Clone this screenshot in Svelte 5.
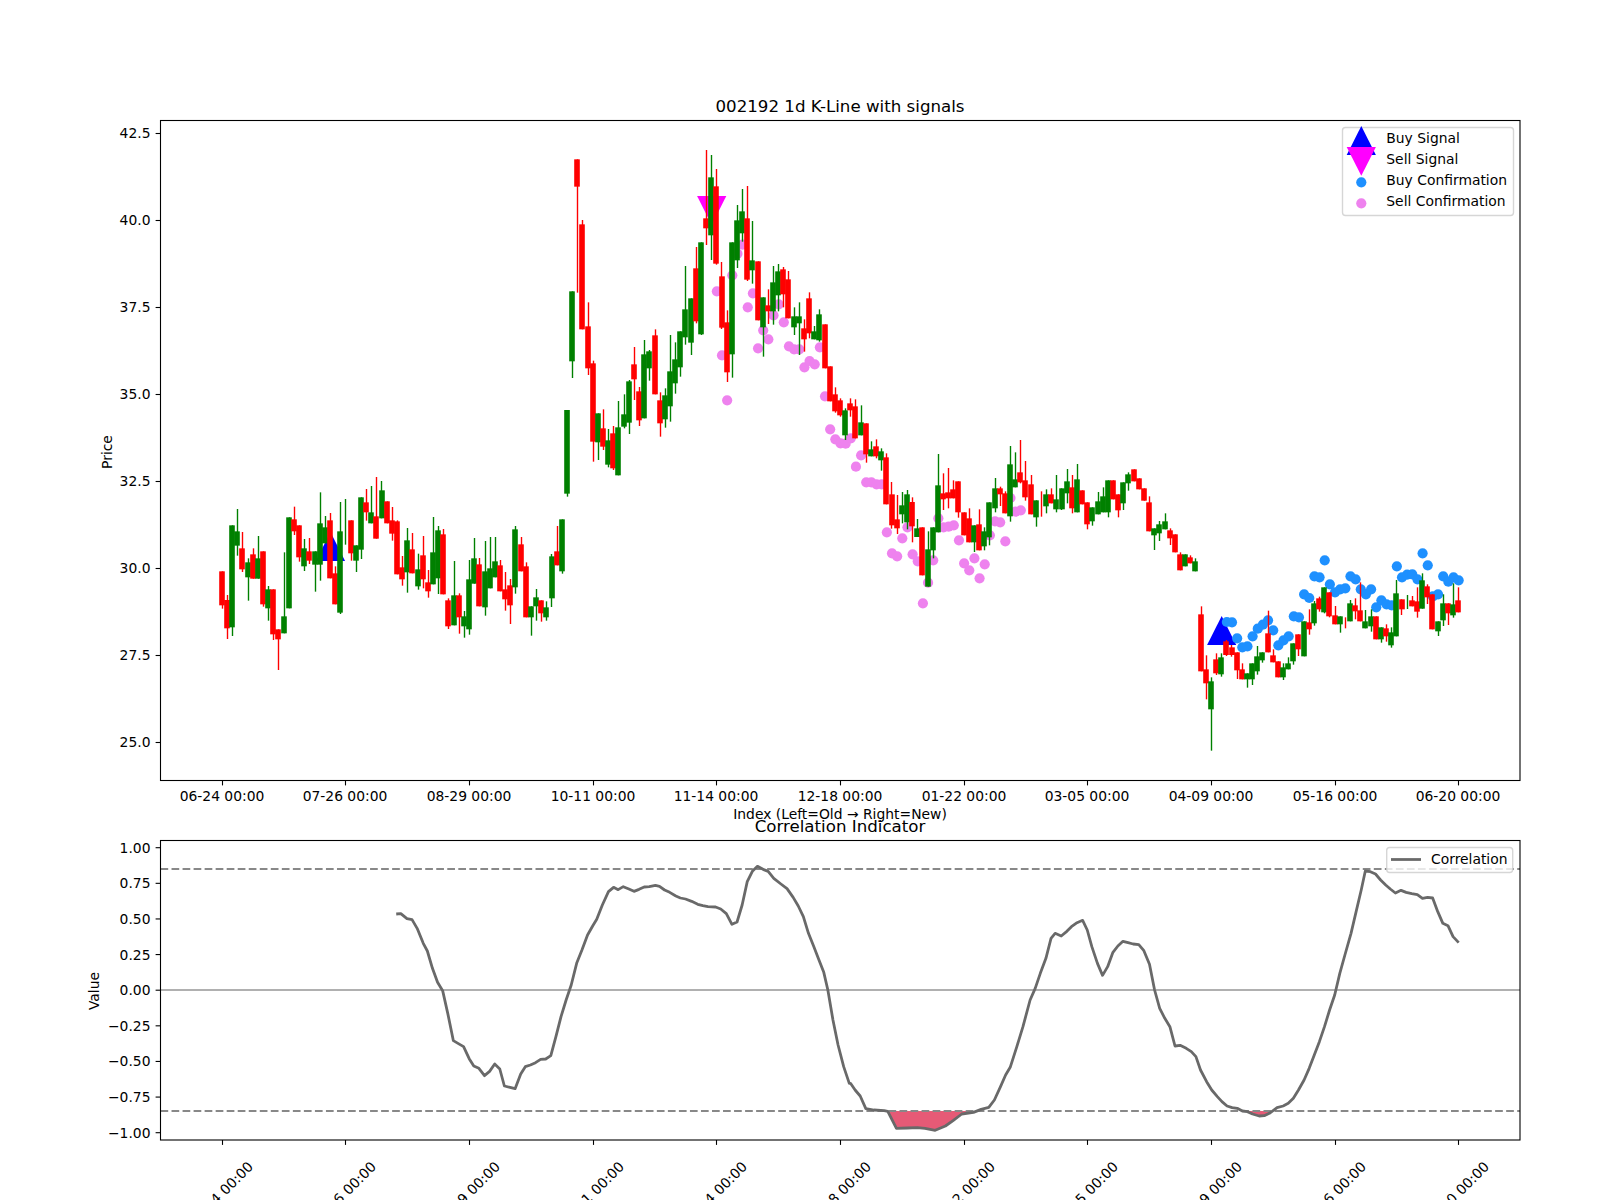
<script>
  const X0 = 222.3, STEP = 5.1515;
  const px = (i) => X0 + STEP * i;
  const seg = (y0, rows) =>
    rows.map(([c, bt, bb, wt, wb]) => ({
      c,
      hasBody: bb > bt,
      bt: y0 + bt / 3,
      bb: y0 + bb / 3,
      wt: y0 + wt / 3,
      wb: y0 + wb / 3
    }));

  // [isRed, bodyTop, bodyBottom, wickTop, wickBottom]
  const candles = [
    ...seg(470, [
      [1,304,406,304,416],[1,390,475,375,507],[0,166,472,166,498],[0,184,227,117,257],[1,235,298,186,306],
      [0,277,322,265,392],[1,253,326,235,326],[0,265,326,198,326],[1,244,403,244,410],[0,358,415,348,452],
      [1,358,493,358,510],[1,478,508,478,600],[0,439,490,247,490],[0,142,415,142,415],[1,148,184,110,195],
      [1,166,262,166,275],[0,235,289,207,303],[1,244,272,204,282],[0,244,284,244,365],[0,160,284,67,332],
      [0,172,220,138,220],[1,151,325,129,325],[1,310,403,289,403],[0,184,428,96,432],[0,0,0,87,224],
      [1,151,250,151,272],[0,226,272,226,306],[0,82,239,82,267],[1,97,127,57,152],[0,127,160,48,160],
      [1,139,206,21,206],[0,61,145,33,145],[1,94,160,94,160],[1,151,191,111,212],[1,154,313,151,313],
      [1,292,328,258,347],[0,211,307,174,368],[1,238,310,189,310],[0,298,349,251,359],[1,256,328,198,355],
      [1,337,364,300,383],[0,247,343,141,343],[0,181,325,168,372],[1,193,373,177,373],[1,391,469,385,477],
      [0,376,466,273,466],[1,376,442,370,491],[0,439,469,423,503],[0,328,478,270,494],[0,265,341,204,341],
      [1,283,409,264,409],[0,304,412,213,437],[0,295,355,201,355],[0,274,322,201,322],[1,286,364,270,364],
      [1,358,388,306,422],[1,346,406,327,462],[0,178,352,168,371],[1,223,304,201,304],[1,289,442,277,442],
      [0,409,442,409,497],[0,382,409,357,452],[1,391,430,391,455],[0,412,442,394,452],[0,259,385,252,411],
      [1,244,286,168,286],[0,148,304,148,311]
    ]),
    ...seg(130, [
      [0,840,1091,840,1100],[0,484,694,484,744],[1,88,170,88,488],[1,283,598,270,598],[1,589,715,517,735],
      [1,700,935,692,995],[0,850,937,850,990],[1,895,950,838,960],[0,931,1004,897,1012],[1,910,1015,888,1020],
      [0,892,1036,813,1036],[0,853,890,793,895],[0,754,878,750,912],[1,703,748,651,810],[1,784,871,771,888],
      [0,673,865,630,865],[0,664,715,660,752],[1,616,793,598,793],[1,811,880,787,920],[0,796,868,775,893],
      [0,724,829,615,875],[0,688,760,637,791],[0,604,712,604,740],[0,538,622,408,644],[0,505,638,505,675],
      [1,415,574,351,580],[0,337,613,337,615],[1,265,295,60,345],[0,142,316,75,390],[1,169,401,117,404],
      [1,439,593,396,597],[1,577,727,541,756],[0,337,673,337,743],[0,271,391,225,414],[0,244,310,177,335],
      [1,265,449,168,453],[0,391,421,273,461],[1,394,571,394,571],[0,502,592,502,680],[1,526,544,478,582],
      [0,457,544,408,584],[0,424,496,402,544],[1,418,493,411,532],[1,448,565,423,565],[0,559,592,532,615],
      [0,559,580,517,675],[1,595,628,568,665],[1,505,610,487,625],[0,604,628,588,628],[0,553,631,538,635],
      [1,583,715,583,715],[1,709,814,709,814],[1,793,844,772,848],[1,811,856,805,860],[0,841,916,835,930],
      [1,820,841,805,860],[1,829,925,808,925],[0,877,916,826,916],[1,880,973,880,998],[0,958,979,934,979],
      [1,949,979,928,985],[0,964,991,955,1022]
    ]),
    ...seg(430, [
      [1,82,223,70,223],[1,193,286,156,296],[1,268,295,195,312],[0,226,253,186,280],[0,193,277,180,298],
      [1,216,289,202,337],[0,295,321,267,321],[1,292,436,292,436],[0,358,470,304,470],[0,292,361,292,385],
      [0,166,307,72,307],[1,190,208,130,240],[1,187,205,114,235],[1,178,205,151,205],[1,154,247,154,263],
      [1,247,316,247,316],[1,265,337,235,337],[0,286,337,286,366],[1,283,361,238,361],[0,304,349,292,361],
      [0,217,322,217,346],[0,175,235,144,247],[1,175,193,170,228],[1,190,250,184,250],[0,103,259,48,275],
      [0,148,172,67,172],[1,127,157,30,160],[1,151,202,93,212],[1,163,253,135,253],[0,211,262,211,290],
      [1,0,0,184,260],[0,193,229,178,250],[1,193,220,175,220],[0,208,238,135,247],[0,175,238,175,240],
      [0,154,190,117,220],[1,172,235,135,250],[0,148,247,102,247],[1,181,223,181,223],[1,217,283,217,298],
      [0,232,274,232,287],[0,214,253,186,253],[0,199,247,172,247],[0,151,247,151,262],[1,151,208,151,208],
      [1,193,241,193,262],[0,157,220,157,240],[0,133,160,127,182],[1,118,154,118,154],[1,145,178,145,178],
      [1,175,212,175,212],[1,217,304,199,304],[0,295,316,295,360],[0,283,310,273,333],[0,274,298,250,298],
      [1,301,325,295,345],[1,313,367,313,367],[1,373,421,367,421],[0,373,409,373,409],[1,382,400,376,400],
      [0,394,424,385,424],[1,553,724,529,724],[1,718,760,676,808],[0,754,838,742,962]
    ]),
    ...seg(530, [
      [1,388,430,370,435],[0,382,433,370,440],[1,334,375,330,378],[1,352,375,345,380],[1,367,421,367,447],
      [1,418,448,400,448],[0,430,448,430,473],[0,400,448,400,465],[0,379,424,348,434],[0,367,391,367,398],
      [1,310,367,242,367],[1,376,397,358,397],[1,394,442,394,442],[0,412,442,400,450],[0,400,418,382,418],
      [0,340,394,340,404],[1,313,358,313,378],[0,274,379,274,379],[1,277,298,238,314],[0,220,280,213,287],
      [1,205,238,200,245],[0,172,247,172,250],[1,187,259,187,262],[1,256,283,228,283],[0,259,283,259,308],
      [1,0,0,262,295],[0,220,274,210,274],[1,226,244,205,268],[1,241,274,157,274],[0,274,295,240,295],
      [0,259,289,238,305],[1,259,328,259,328],[0,292,328,292,338],[1,295,319,283,335],[0,307,346,292,353],
      [0,190,319,150,319],[1,208,238,208,255],[0,0,0,195,237],[1,211,229,198,229],[1,214,245,172,263],
      [0,151,236,130,236],[1,169,202,163,222],[1,193,298,193,298],[0,274,304,274,318],[0,220,271,193,288],
      [1,220,250,220,285],[0,223,256,160,263],[1,211,247,172,247]
    ])
  ].map((d, i) => ({
    ...d,
    wx: Math.floor(px(i)) + 0.5,
    bx: Math.floor(219.32 + STEP * i) + 0.2
  }));

  const sellDots = [
    291.3,355.3,400.3,275.3,253.7,244.7,307.3,293.3,348.3,330.3,339.3,315.3,304.3,322.3,346.3,349.3,349.3,367.3,361,364.3,
    347.3,396.3,429.3,439.3,443.3,443.7,438.3,466.7,455.3,482.3,482.3,484.3,484.3,532.3,553.3,556.3,538.3,527.3,554.3,561.3,
    603.3,582.7,560.3,518.3,527.3,526.7,525.3,540.3,563.3,570.3,558.3,578.3,564.3,535.3,521.3,522.3,541.3,498,511.7,510.3
  ].map((y, k) => ({ x: px(96 + k), y }));

  const buyDots = [
    276,277,325,352,349,319,296,284,271,301,346,331,319,259,262,193,204,139,142,91,163,187,178,175,139,148,178,193,178,232,
    211,223,226,109,142,134,133,148,70,106,199,193,139,155,142,151
  ].map((v, k) => ({ x: px(195 + k), y: 530 + v / 3 }));

  const tri = (cx, apex, base) => `${cx},${apex} ${cx - 14.6},${base} ${cx + 14.6},${base}`;

  const priceTicks = [42.5, 40, 37.5, 35, 32.5, 30, 27.5, 25].map((p) => ({
    y: 133.5 + (42.5 - p) * 34.8,
    label: p.toFixed(1)
  }));
  const dates = ['06-24','07-26','08-29','10-11','11-14','12-18','01-22','03-05','04-09','05-16','06-20'];
  const xTicks = dates.map((d, k) => ({
    x: Math.floor(px(24 * k)) + 0.5,
    label: `${d} 00:00`
  }));
  const vy = (v) => 990.2 - v * 142.5;
  const valueTicks = [1, 0.75, 0.5, 0.25, 0, -0.25, -0.5, -0.75, -1].map((v) => ({
    y: vy(v),
    label: (v < 0 ? '\u2212' : '') + Math.abs(v).toFixed(2)
  }));

  const z6 = [[659,432],[668,431],[680,446],[690,449],[700,475],[712,520],[720,543],[730,595],[740,637],[750,662],[760,730],[771,812],[780,820],[791,830],[802,866],[811,888],[821,895],[832,917],[842,904],[852,882],[862,897],[871,948],[882,952],[892,956],[903,912],[912,890],[922,885],[932,878],[942,868],[952,867],[962,857],[972,800],[982,740],[992,690],[1002,645],[1013,578],[1023,540],[1034,495],[1044,468],[1052,448],[1063,405],[1075,365],[1085,352],[1094,359],[1104,350],[1115,357],[1125,364],[1135,358],[1145,351],[1155,350],[1167,346],[1175,349],[1185,360],[1195,367],[1207,378],[1216,384],[1226,387],[1238,394],[1250,403],[1260,407],[1270,410],[1285,411],[1295,417],[1306,431],[1317,463],[1327,456],[1337,405],[1347,335],[1357,304],[1367,289],[1378,298],[1388,304],[1399,325],[1413,342],[1425,356],[1437,382],[1447,408],[1457,440],[1467,490],[1477,528],[1487,568],[1497,607],[1505,660],[1515,750],[1525,825],[1536,890],[1547,940]];
  const z7 = [[99,940],[108,960],[118,978],[129,1016],[145,1020],[165,1022],[172,1024],[189,1075],[210,1074],[230,1073],[245,1075],[265,1081],[285,1068],[300,1052],[317,1032],[340,1027],[355,1018],[370,1012],[381,990],[393,950],[403,915],[412,892],[425,830],[437,770],[451,690],[461,655],[471,610],[482,565],[492,505],[500,490],[512,498],[523,484],[532,470],[543,458],[554,451],[563,480],[572,530],[583,580],[593,616],[603,590],[613,548],[623,528],[633,514],[643,518],[653,522],[664,524],[674,542],[685,583],[695,660],[705,715],[715,745],[725,770],[735,828],[745,826],[757,835],[767,845],[776,860],[785,900],[797,935],[807,960],[818,980],[827,995],[837,1008],[847,1013],[857,1015],[867,1023],[877,1025],[887,1032],[900,1038],[910,1037],[920,1030],[935,1013],[947,1008],[957,1000],[967,985],[977,960],[988,930],[998,895],[1008,855],[1018,815],[1028,770],[1038,720],[1048,675],[1058,610],[1068,555],[1080,490],[1090,425],[1100,360],[1108,303],[1118,305],[1128,312],[1138,330],[1148,345],[1157,357],[1167,369],[1178,361],[1188,367],[1199,371],[1210,374],[1220,385],[1230,382],[1240,384],[1250,425],[1260,460],[1270,467],[1280,500],[1291,518]];
  const corr = [
    ...z6.map(([a, b]) => [60 + a / 1.96, 770 + b / 3]),
    ...z7.map(([a, b]) => [800 + a / 1.96, 770 + b / 3])
  ];
  const corrLine = corr.map((p) => p.join(',')).join(' ');

  const HIGH = 869, LOW = 1111;
  function regionsBelow(points, level) {
    const out = [];
    let cur = null;
    for (let k = 1; k < points.length; k++) {
      const [x0, y0] = points[k - 1];
      const [x1, y1] = points[k];
      if ((y0 > level) !== (y1 > level)) {
        const xc = x0 + ((level - y0) / (y1 - y0)) * (x1 - x0);
        if (y1 > level) cur = [[xc, level], [x1, y1]];
        else { cur.push([xc, level]); out.push(cur.map((p) => p.join(',')).join(' ')); cur = null; }
      } else if (cur) cur.push([x1, y1]);
    }
    return out;
  }
  const fills = regionsBelow(corr, LOW);

  const legendRows = [
    { label: 'Buy Signal', y: 143.3 },
    { label: 'Sell Signal', y: 164.3 },
    { label: 'Buy Confirmation', y: 185.3 },
    { label: 'Sell Confirmation', y: 206.3 }
  ];
</script>

<svg class="figure" viewBox="0 0 1600 1200" width="1600" height="1200" role="img" aria-label="002192 1d K-Line with signals">
  <text class="title" x="840" y="111.7">002192 1d K-Line with signals</text>

  <!-- price panel -->
  <polygon class="buy" points={tri(px(21), 532, 561)} />
  <polygon class="buy" points={tri(px(194), 616, 645)} />
  <polygon class="sell" points={tri(px(95), 225, 196)} />
  {#each sellDots as d}
    <circle class="dot-sell" cx={d.x} cy={d.y} r="5.1" />
  {/each}
  {#each buyDots as d}
    <circle class="dot-buy" cx={d.x} cy={d.y} r="5.1" />
  {/each}
  {#each candles as d}
    <g class={d.c ? 'red' : 'green'}>
      <line class="wick" x1={d.wx} x2={d.wx} y1={d.wt} y2={d.wb} />
      {#if d.hasBody}
        <rect x={d.bx} y={d.bt} width="5.6" height={d.bb - d.bt} />
      {/if}
    </g>
  {/each}

  <rect class="frame" x="160.5" y="120.5" width="1359.5" height="660" />
  {#each priceTicks as t}
    <line class="tick" x1="155.6" x2="160.5" y1={t.y} y2={t.y} />
    <text class="yl" x="150.5" y={t.y + 4.2}>{t.label}</text>
  {/each}
  {#each xTicks as t}
    <line class="tick" x1={t.x} x2={t.x} y1="780.5" y2="785.4" />
    <text class="xl" x={t.x - 0.5} y="801">{t.label}</text>
  {/each}
  <text class="xl" x="840" y="819">Index (Left=Old → Right=New)</text>
  <text class="xl" transform="rotate(-90 112 452)" x="112" y="452">Price</text>

  <g class="legend">
    <rect class="legend-box" x="1342.5" y="127.5" width="171" height="88" rx="3" />
    <polygon class="buy" points="1361.3,126 1346.7,155 1375.9,155" />
    <polygon class="sell" points="1361.3,175.7 1346.7,147 1375.9,147" />
    <circle class="dot-buy" cx="1361.3" cy="182.3" r="5.1" />
    <circle class="dot-sell" cx="1361.3" cy="203.3" r="5.1" />
    {#each legendRows as r}
      <text class="ll" x="1386.3" y={r.y}>{r.label}</text>
    {/each}
  </g>

  <!-- correlation panel -->
  <text class="title" x="840" y="831.7">Correlation Indicator</text>
  {#each fills as f}
    <polygon class="under" points={f} />
  {/each}
  <line class="zero" x1="160.5" x2="1520" y1="990" y2="990" />
  <line class="limit" x1="160.5" x2="1520" y1={HIGH} y2={HIGH} />
  <line class="limit" x1="160.5" x2="1520" y1={LOW} y2={LOW} />
  <polyline class="corr" points={corrLine} />

  <rect class="frame" x="160.5" y="840.5" width="1359.5" height="299.5" />
  {#each valueTicks as t}
    <line class="tick" x1="155.6" x2="160.5" y1={t.y} y2={t.y} />
    <text class="yl" x="150.5" y={t.y + 5}>{t.label}</text>
  {/each}
  {#each xTicks as t}
    <line class="tick" x1={t.x} x2={t.x} y1="1140" y2="1144.9" />
    <text class="xl" transform="rotate(-45 {t.x - 2} 1194)" x={t.x - 2} y="1199">{t.label}</text>
  {/each}
  <text class="xl" transform="rotate(-90 98.5 991)" x="98.5" y="991">Value</text>

  <rect class="legend-box" x="1386.7" y="847.5" width="126" height="25" rx="3" />
  <line class="corr" x1="1391" x2="1421" y1="859.5" y2="859.5" />
  <text class="ll" x="1431" y="864.3">Correlation</text>
</svg>

<style>
  :global(body) { margin: 0; background: #fff; }
  .figure { display: block; font-family: "DejaVu Sans", sans-serif; font-size: 13.89px; fill: #000; }
  .title { font-size: 16.67px; text-anchor: middle; }
  .xl { text-anchor: middle; }
  .yl { text-anchor: end; }
  .frame { fill: none; stroke: #000; stroke-width: 1.1; }
  .tick { stroke: #000; stroke-width: 1.1; }
  .wick { stroke-width: 1.39; }
  .red { fill: #ff0000; stroke: #ff0000; }
  .green { fill: #008000; stroke: #008000; }
  .red rect, .green rect { stroke: none; }
  .buy { fill: #0000ff; }
  .sell { fill: #ff00ff; }
  .dot-buy { fill: #1e90ff; }
  .dot-sell { fill: #ee82ee; }
  .legend-box { fill: #fff; fill-opacity: 0.8; stroke: #ccc; stroke-opacity: 0.8; stroke-width: 1.39; }
  .under { fill: #dc143c; fill-opacity: 0.7; }
  .zero { stroke: #b0b0b0; stroke-width: 2.08; }
  .limit { stroke: #888; stroke-width: 2.08; stroke-dasharray: 7.7 3.33; }
  .corr { fill: none; stroke: #696969; stroke-width: 2.78; stroke-linejoin: round; }
</style>
